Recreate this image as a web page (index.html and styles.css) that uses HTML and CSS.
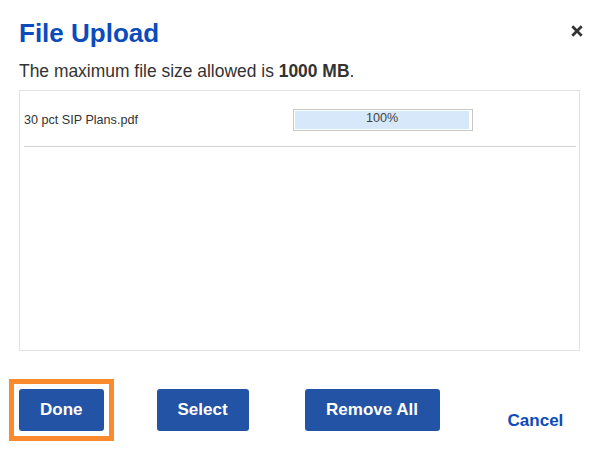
FILE: index.html
```html
<!DOCTYPE html>
<html lang="en">
<head>
<meta charset="utf-8">
<title>File Upload</title>
<link rel="stylesheet" href="styles.css">
</head>
<body>
<div class="dialog">
  <header class="head">
    <h1 class="title">File Upload</h1>
    <button class="close" aria-label="Close">
      <svg width="12" height="12" viewBox="0 0 12 12"><path d="M1.3 1.3L10.7 10.7M10.7 1.3L1.3 10.7" stroke="#333" stroke-width="2.7" stroke-linecap="butt"/></svg>
    </button>
  </header>
  <p class="note">The maximum file size allowed is <b>1000 MB</b>.</p>
  <div class="files">
    <div class="file-row">
      <span class="file-name">30 pct SIP Plans.pdf</span>
      <div class="progress"><div class="progress-fill">100%</div></div>
    </div>
  </div>
  <div class="actions">
    <span class="focus-ring"><button class="btn btn-done">Done</button></span>
    <button class="btn btn-select">Select</button>
    <button class="btn btn-remove">Remove All</button>
    <a class="cancel" href="#">Cancel</a>
  </div>
</div>
</body>
</html>
```
FILE: styles.css
```css
html, body {
  margin: 0;
  padding: 0;
  background: #fff;
}
body {
  font-family: "Liberation Sans", Arial, sans-serif;
  color: #333;
}
.dialog {
  width: 605px;
  height: 467px;
  box-sizing: border-box;
  padding: 18px 25px 0 19px;
}
.head {
  display: flex;
  align-items: flex-start;
  justify-content: space-between;
  height: 30px;
}
.title {
  margin: 0;
  font-size: 26px;
  line-height: 30px;
  font-weight: bold;
  color: #0b4bbb;
}
.close {
  border: 0;
  background: none;
  padding: 0;
  margin: 7px -3px 0 0;
  width: 12px;
  height: 12px;
  display: flex;
}
.note {
  margin: 13px 0 0 0;
  font-size: 17.45px;
  line-height: 20px;
  color: #333;
}
.note b {
  font-weight: bold;
}
.files {
  margin-top: 9px;
  height: 261px;
  box-sizing: border-box;
  border: 1px solid #e2e2e2;
  padding: 0 3px 0 4px;
}
.file-row {
  display: flex;
  align-items: center;
  padding: 18px 0 15px;
  border-bottom: 1px solid #d2d2d2;
}
.file-name {
  width: 269px;
  font-size: 12.6px;
  line-height: 22px;
  color: #333;
}
.progress {
  width: 180px;
  height: 22px;
  box-sizing: border-box;
  border: 1px solid #c8c8c8;
  padding: 1px 3px 1px 1px;
  background: #fff;
}
.progress-fill {
  height: 100%;
  background: #d6e8f9;
  font-size: 12.6px;
  line-height: 15px;
  text-align: center;
  color: #444;
}
.actions {
  display: flex;
  align-items: stretch;
  margin-top: 38px;
  height: 42px;
}
.btn {
  font-family: "Liberation Sans", Arial, sans-serif;
  font-size: 17px;
  font-weight: bold;
  color: #fff;
  background: #2353a4;
  border: 0;
  border-radius: 3px;
  padding: 0 21px;
  height: 42px;
}
.focus-ring {
  display: flex;
  border: 5px solid #fb8a2e;
  padding: 5px;
  margin: -10px 43px -10px -10px;
}
.btn-select {
  margin-right: 56px;
}
.btn-remove {
  padding: 0 21.5px;
  margin-right: 68px;
}
.cancel {
  align-self: flex-end;
  font-size: 17px;
  font-weight: bold;
  line-height: 20px;
  color: #0b4bbb;
  text-decoration: none;
}
```
